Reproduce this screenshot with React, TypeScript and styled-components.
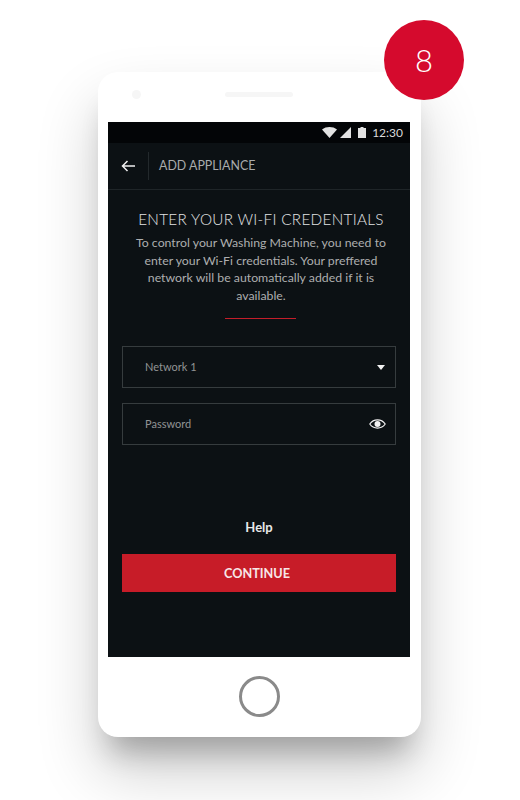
import styled, { createGlobalStyle } from 'styled-components'

const GlobalStyle = createGlobalStyle`
  html, body {
    margin: 0;
    padding: 0;
    background: #FFFFFF;
    overflow: hidden;
  }
`

const Page = styled.div`
  position: relative;
  width: 520px;
  height: 800px;
  padding: 72px 0 0 98px;
  box-sizing: border-box;
  overflow: hidden;
  font-family: 'Lato', 'Liberation Sans', sans-serif;
`

const StepBadge = styled.div`
  position: absolute;
  top: 20px;
  left: 384px;
  z-index: 2;
  width: 80px;
  height: 80px;
  border-radius: 50%;
  background: #D50A2D;
  color: #FFFFFF;
  font-size: 31px;
  font-weight: 300;
  display: flex;
  align-items: center;
  justify-content: center;
`

const Phone = styled.div`
  width: 323px;
  height: 665px;
  padding-left: 10px;
  box-sizing: border-box;
  background: #FFFFFF;
  border-radius: 20px;
  box-shadow: 0 34px 62px rgba(0, 0, 0, 0.2), 0 26px 28px -12px rgba(0, 0, 0, 0.24);
  display: flex;
  flex-direction: column;
`

const TopBezel = styled.div`
  height: 50px;
  flex-shrink: 0;
  padding: 18px 0 0 24px;
  box-sizing: border-box;
  display: flex;
  align-items: flex-start;
  gap: 84px;
`

const Camera = styled.div`
  width: 9px;
  height: 9px;
  border-radius: 50%;
  background: #F6F6F6;
`

const Speaker = styled.div`
  width: 68px;
  height: 5px;
  margin-top: 2px;
  border-radius: 3px;
  background: #F6F6F6;
`

const Screen = styled.div`
  width: 302px;
  height: 535px;
  flex-shrink: 0;
  background: #0C1114;
  display: flex;
  flex-direction: column;
`

const StatusBar = styled.div`
  height: 21px;
  background: #030507;
  display: flex;
  align-items: center;
  justify-content: flex-end;
  padding-right: 7px;
  color: #DADADA;
  font-size: 12px;
`

const StatusIcon = styled.svg<{ $gap: number }>`
  margin-right: ${({ $gap }) => $gap}px;
  fill: #E2E2E2;
`

const Toolbar = styled.div`
  height: 47px;
  flex-shrink: 0;
  border-bottom: 1px solid #1F2528;
  box-sizing: border-box;
  display: flex;
  align-items: center;
`

const BackButton = styled.div`
  width: 41px;
  height: 28px;
  border-right: 1px solid #23292C;
  display: flex;
  align-items: center;
  justify-content: center;
  box-sizing: border-box;
`

const ToolbarTitle = styled.span`
  margin: 0 0 1px 10px;
  color: #A9ABAC;
  font-size: 12.4px;
`

const Content = styled.div`
  flex: 1;
  padding: 19px 14px 0;
  display: flex;
  flex-direction: column;
  align-items: center;
`

const Heading = styled.h1`
  margin: 0 0 0 4px;
  color: #E2E3E4;
  font-size: 15.3px;
  line-height: 20px;
  font-weight: 300;
  letter-spacing: 0.3px;
  text-align: center;
  white-space: nowrap;
`

const Intro = styled.p`
  margin: 5px 0 0 4px;
  width: 264px;
  color: #ADAEAF;
  font-size: 12.3px;
  line-height: 17.5px;
  text-align: center;
`

const Divider = styled.div`
  width: 71px;
  height: 1px;
  margin: 14px 0 0 2px;
  background: #C41E2A;
`

const Fields = styled.div`
  width: 100%;
  margin-top: 27px;
  display: flex;
  flex-direction: column;
  gap: 15px;
`

const Field = styled.div`
  height: 42px;
  border: 1px solid #363C3E;
  box-sizing: border-box;
  padding: 0 9px 0 22px;
  display: flex;
  align-items: center;
  justify-content: space-between;
  color: #929495;
  font-size: 11px;
`

const FieldLabel = styled.span`
  margin-bottom: 2px;
`

const Help = styled.div`
  margin-top: 74px;
  color: #E8E8E8;
  font-size: 13px;
  line-height: 16px;
  font-weight: 700;
`

const ContinueButton = styled.button`
  width: 100%;
  height: 38px;
  margin-top: 19px;
  padding: 0 4px 0 0;
  border: 0;
  background: #C71C28;
  color: #F7E6E7;
  font-family: inherit;
  font-size: 12.7px;
  font-weight: 700;
`

const HomeButton = styled.div`
  width: 41px;
  height: 41px;
  margin: 19px 0 0 131px;
  border: 3px solid #8A8A8A;
  border-radius: 50%;
  box-sizing: border-box;
`

export default function App() {
  return (
    <Page>
      <GlobalStyle />
      <StepBadge>8</StepBadge>
      <Phone>
        <TopBezel>
          <Camera />
          <Speaker />
        </TopBezel>
        <Screen>
          <StatusBar>
            <StatusIcon $gap={3} width="15" height="11" viewBox="0 0 15 11">
              <path d="M0 2.500C4-.8 11-.8 15 2.500L7.500 11Z" />
            </StatusIcon>
            <StatusIcon $gap={7} width="11" height="11" viewBox="0 0 11 11">
              <path d="M11 0V11H0Z" />
            </StatusIcon>
            <StatusIcon $gap={6} width="8" height="11" viewBox="0 0 8 11">
              <path d="M2.500 0H5.500V1H8V11H0V1H2.500Z" />
            </StatusIcon>
            <span>12:30</span>
          </StatusBar>
          <Toolbar>
            <BackButton>
              <svg width="14" height="12" viewBox="0 0 14 12" fill="none" stroke="#F0F0F0" strokeWidth="1.5">
                <path d="M14 6H1.500M6.500 1 1.500 6l5 5" />
              </svg>
            </BackButton>
            <ToolbarTitle>ADD APPLIANCE</ToolbarTitle>
          </Toolbar>
          <Content>
            <Heading>ENTER YOUR WI-FI CREDENTIALS</Heading>
            <Intro>
              To control your Washing Machine, you need to enter your Wi-Fi credentials. Your
              preffered network will be automatically added if it is available.
            </Intro>
            <Divider />
            <Fields>
              <Field>
                <FieldLabel>Network 1</FieldLabel>
                <svg width="8" height="5" viewBox="0 0 8 5" style={{ marginRight: 1 }}>
                  <path d="M0 0H8L4 5Z" fill="#F2F2F2" />
                </svg>
              </Field>
              <Field>
                <FieldLabel>Password</FieldLabel>
                <svg width="17" height="12" viewBox="0 0 17 12">
                  <path d="M.8 6C4.500.6 12.500.6 16.200 6 12.500 11.400 4.500 11.400.8 6Z" fill="none" stroke="#F2F2F2" strokeWidth="1.2" />
                  <circle cx="8.500" cy="6" r="3" fill="#F2F2F2" />
                </svg>
              </Field>
            </Fields>
            <Help>Help</Help>
            <ContinueButton>CONTINUE</ContinueButton>
          </Content>
        </Screen>
        <HomeButton />
      </Phone>
    </Page>
  )
}
